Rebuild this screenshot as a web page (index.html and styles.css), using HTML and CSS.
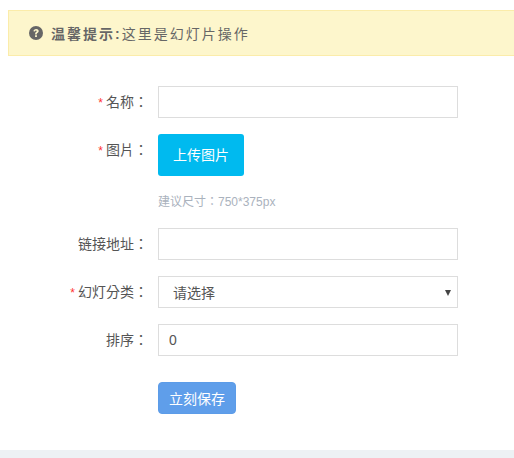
FILE: index.html
```html
<!DOCTYPE html>
<html>
<head>
<meta charset="utf-8">
<title>幻灯片操作</title>
<link rel="stylesheet" href="styles.css">
</head>
<body>

<div class="main">
	<!-- 提示 -->
	<div class="tips">
		<svg class="tips-icon" viewBox="0 0 14 14" width="14" height="14">
			<circle cx="7" cy="7" r="7" fill="#666"/>
			<path d="M4.4 5.3C4.5 3.8 5.6 2.9 7.1 2.9c1.5 0 2.6.9 2.6 2.2 0 1.1-.7 1.6-1.3 2-.4.3-.6.5-.6 1v.3H6.1v-.6c0-.8.4-1.3.9-1.7.4-.3.7-.5.7-.9 0-.4-.3-.7-.8-.7s-.8.3-.9.9z" fill="#fdf6cc"/>
			<rect x="6.1" y="9.2" width="1.8" height="1.8" fill="#fdf6cc"/>
		</svg>
		<b>温馨提示:</b>这里是幻灯片操作
	</div>

	<form class="form">
		<div class="row">
			<label class="label"><i>*</i>名称：</label>
			<input class="field" type="text">
		</div>
		<div class="row row-pic">
			<label class="label"><i>*</i>图片：</label>
			<div>
				<button class="btn-upload" type="button">上传图片</button>
				<p class="hint">建议尺寸：750*375px</p>
			</div>
		</div>
		<div class="row">
			<label class="label">链接地址：</label>
			<input class="field" type="text">
		</div>
		<div class="row">
			<label class="label"><i>*</i>幻灯分类：</label>
			<div class="select-wrap">
				<select class="field field-select">
					<option>请选择</option>
				</select>
				<span class="select-arrow"></span>
			</div>
		</div>
		<div class="row">
			<label class="label">排序：</label>
			<input class="field" type="text" value="0">
		</div>
		<div class="row row-save">
			<span class="label"></span>
			<button class="btn-save" type="button">立刻保存</button>
		</div>
	</form>
</div>

<div class="bottom"></div>

</body>
</html>
```

FILE: styles.css
```css
* {
  box-sizing: border-box;
}
body {
  margin: 0;
  height: 458px;
  overflow: hidden;
  background: #fff;
  color: #555;
  font-size: 14px;
  font-family: "Liberation Sans", "Noto Sans CJK SC", sans-serif;
}

.main {
  height: 450px;
  padding: 10px 0 0 8px;
}

.tips {
  display: flex;
  align-items: center;
  height: 46px;
  padding-left: 20px;
  background: #fdf6cc;
  border: 1px solid #fbecaa;
  border-right: 0;
  color: #666;
  letter-spacing: 2px;
}
.tips-icon {
  margin-right: 8px;
  flex: none;
}
.tips b {
  font-weight: bold;
}

.form {
  margin-top: 30px;
}
.row {
  display: flex;
  align-items: flex-start;
  margin-bottom: 16px;
}
.label {
  width: 150px;
  height: 32px;
  padding-right: 10px;
  line-height: 33px;
  text-align: right;
  color: #555;
  font-family: "Liberation Sans", "Noto Sans CJK TC", sans-serif;
  flex: none;
}
.label i {
  margin-right: 3px;
  color: #f33;
  font-style: normal;
  font-size: 12px;
  line-height: 1;
}

.field {
  display: block;
  width: 300px;
  height: 32px;
  padding: 0 10px;
  border: 1px solid #ddd;
  border-radius: 0;
  background: #fff;
  color: #555;
  font: inherit;
  outline: none;
}
.select-wrap {
  position: relative;
}
.field-select {
  padding: 2px 0 0 14px;
  appearance: none;
  -webkit-appearance: none;
}
.select-arrow {
  position: absolute;
  top: 14px;
  right: 7px;
  border-top: 6px solid #444;
  border-left: 3.5px solid transparent;
  border-right: 3.5px solid transparent;
}

.row-pic {
  margin-bottom: 17px;
}
.row-pic .label {
  line-height: 32px;
}
.btn-upload {
  display: block;
  width: 86px;
  height: 42px;
  padding: 0 0 2px 0;
  border: 0;
  border-radius: 3px;
  background: #00baef;
  color: #fff;
  font: inherit;
}
.hint {
  margin: 17px 0 0 0;
  line-height: 18px;
  font-size: 12px;
  color: #aab2bd;
  font-family: "Liberation Sans", "Noto Sans CJK TC", sans-serif;
}

.row-save {
  margin: 26px 0 0 0;
}
.btn-save {
  width: 78px;
  height: 32px;
  padding: 0;
  border: 1px solid #5c9ce8;
  border-radius: 4px;
  background: #5f9eea;
  color: #fff;
  font: inherit;
}

.bottom {
  height: 8px;
  background: #edf1f4;
}
```
